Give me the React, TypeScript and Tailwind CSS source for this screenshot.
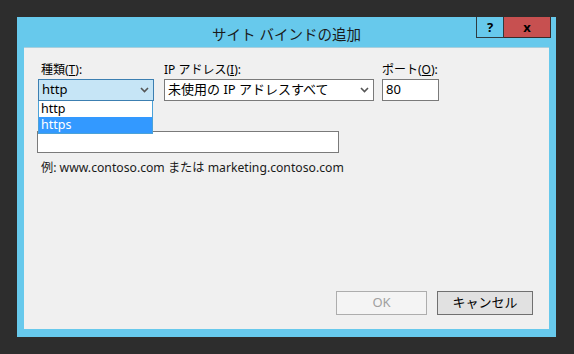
import React from "react";

const font = { fontFamily: '"Noto Sans", "Noto Sans CJK JP", sans-serif' };

function Chevron() {
  return (
    <svg width="9" height="6" viewBox="0 0 9 6" className="shrink-0">
      <path d="M1 1 L4.5 4.5 L8 1" stroke="#555" strokeWidth="1.6" fill="none" />
    </svg>
  );
}

export default function App() {
  return (
    <div
      className="w-[574px] h-[354px] bg-[#2d2d2d] pt-[17px] pl-[17px] text-[12px] text-black"
      style={font}
    >
      <div className="w-[539px] h-[320px] bg-[#67c9ec] flex flex-col">
        <div className="relative h-[30px] flex items-center justify-center shrink-0">
          <span className="text-[14.5px] text-[#1a1a1a] mt-[6px]">サイト バインドの追加</span>
          <div className="absolute top-0 right-[5px] flex">
            <div className="w-[28px] h-[21px] border border-[#2f3b40] border-t-0 flex items-center justify-center font-bold text-[13px] leading-none">
              ?
            </div>
            <div className="w-[47px] h-[21px] bg-[#c75050] border border-[#3a2a2a] border-t-0 border-l-0 flex items-center justify-center font-bold text-[13px] leading-none">
              x
            </div>
          </div>
        </div>
        <div className="mx-[7px] h-[282px] bg-[#f0f0f0] border-t border-[#a9cfdd] flex flex-col pl-[14px] pr-[16px]">
          <div className="flex mt-[13px] gap-[10px]">
            <div className="flex flex-col w-[116px]">
              <div className="h-[18px] pl-[3px] leading-[18px]">
                種類(<span className="underline">T</span>):
              </div>
              <div className="relative">
                <div className="h-[22px] bg-[#c6e5f6] border border-[#3c7fb1] flex items-center pl-[3px] pr-[4px] justify-between text-[13px]">
                  <span>http</span>
                  <Chevron />
                </div>
                <div className="absolute top-full left-0 w-[115px] z-10 bg-white border border-[#4ba2d8] border-t-0 text-[12.5px]">
                  <div className="h-[16px] leading-[16px] pl-[2px] overflow-hidden">http</div>
                  <div className="h-[16px] leading-[16px] pl-[2px] overflow-hidden bg-[#3399ff] text-white">https</div>
                </div>
              </div>
            </div>
            <div className="flex flex-col w-[210px]">
              <div className="h-[18px] leading-[18px]">
                IP アドレス(<span className="underline">I</span>):
              </div>
              <div className="h-[22px] bg-white border border-[#7a7a7a] flex items-center pl-[3px] pr-[4px] justify-between text-[13px]">
                <span>未使用の IP アドレスすべて</span>
                <Chevron />
              </div>
            </div>
            <div className="flex flex-col w-[57px] ml-[-2px]">
              <div className="h-[18px] leading-[18px]">
                ポート(<span className="underline">O</span>):
              </div>
              <div className="h-[22px] bg-white border border-[#7a7a7a] flex items-center pl-[3px] text-[13px]">
                80
              </div>
            </div>
          </div>
          <div className="w-[302px] h-[22px] bg-white border border-[#7a7a7a] mt-[30px] ml-[-1px]"></div>
          <div className="mt-[6px] pl-[3px] text-[12.2px] text-[#1a1a1a]">
            例: www.contoso.com または marketing.contoso.com
          </div>
          <div className="mt-auto mb-[14px] flex justify-end gap-[10px]">
            <div className="w-[91px] h-[24px] bg-[#f4f4f4] border border-[#adadad] flex items-center justify-center text-[#a0a0a0] text-[13px]">
              OK
            </div>
            <div className="w-[96px] h-[24px] bg-[#e1e1e1] border border-[#707070] flex items-center justify-center text-[13px]">
              キャンセル
            </div>
          </div>
        </div>
      </div>
    </div>
  );
}
